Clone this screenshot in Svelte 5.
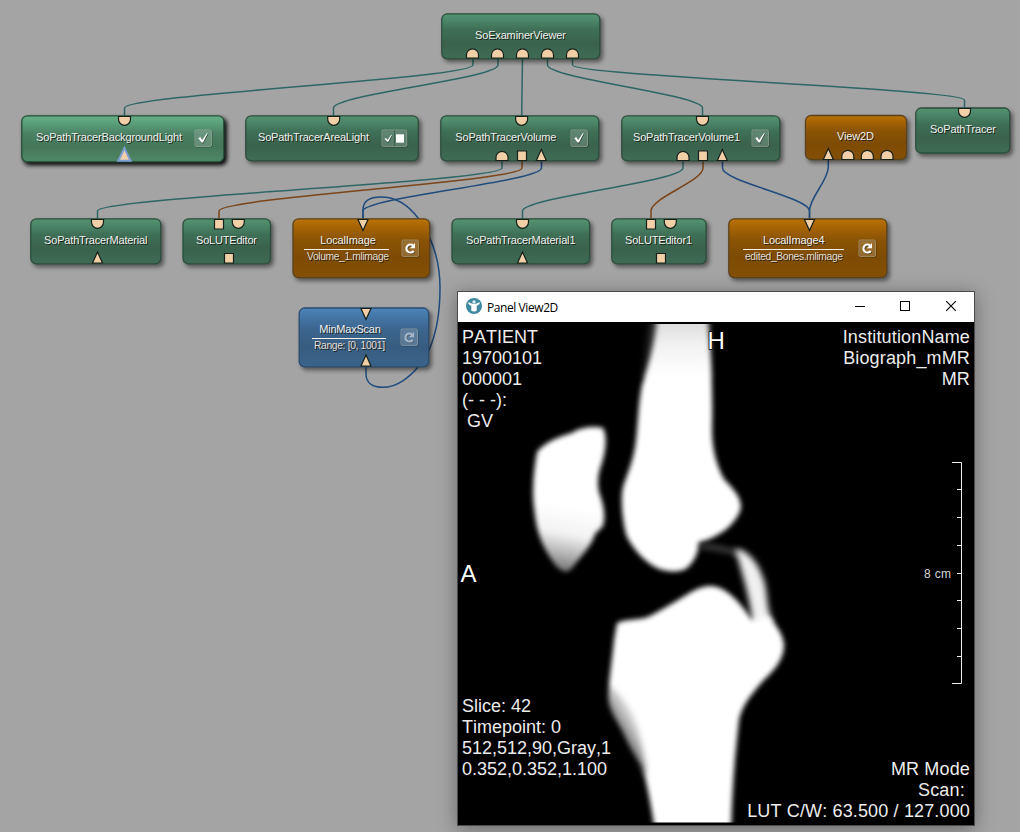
<script>
  const nodes = [
    { x: 441.5, y: 13.5, w: 158, h: 45, kind: 'green', label: 'SoExaminerViewer', tx: 475, tw: 91, ty: 39 },
    { x: 21.5, y: 115.5, w: 202, h: 46, kind: 'lit', label: 'SoPathTracerBackgroundLight', tx: 36, tw: 146, ty: 141, btn: 'check', bx: 194.5, by: 129.5 },
    { x: 245.5, y: 115.5, w: 172.5, h: 45, kind: 'green', label: 'SoPathTracerAreaLight', tx: 258, tw: 111, ty: 141, btn: 'double', bx: 381.5, by: 129.5 },
    { x: 440.5, y: 115.5, w: 158, h: 45, kind: 'green', label: 'SoPathTracerVolume', tx: 455.3, tw: 101, ty: 141, btn: 'check', bx: 570.5, by: 129.5 },
    { x: 621.5, y: 115.5, w: 158, h: 45, kind: 'green', label: 'SoPathTracerVolume1', tx: 633, tw: 107, ty: 141, btn: 'check', bx: 751.5, by: 129.5 },
    { x: 805.2, y: 115.2, w: 101, h: 44, kind: 'orange', label: 'View2D', tx: 837, tw: 37, ty: 140 },
    { x: 915.5, y: 107.7, w: 94, h: 45, kind: 'green', label: 'SoPathTracer', tx: 930, tw: 66, ty: 133 },
    { x: 30.5, y: 218.5, w: 130, h: 45, kind: 'green', label: 'SoPathTracerMaterial', tx: 44, tw: 103.5, ty: 244 },
    { x: 182.7, y: 218.5, w: 87.5, h: 45, kind: 'green', label: 'SoLUTEditor', tx: 196, tw: 61, ty: 244 },
    { x: 292.7, y: 218.5, w: 136.6, h: 58.8, kind: 'orange', label: 'LocalImage', tx: 320.3, tw: 55.5, ty: 244, sub: 'Volume_1.mlimage', sx: 307, sw: 82, lx: 304, lw: 85, btn: 'reload', bx: 401.5, by: 239.5 },
    { x: 451.7, y: 218.5, w: 137.6, h: 45, kind: 'green', label: 'SoPathTracerMaterial1', tx: 466, tw: 109.5, ty: 244 },
    { x: 611.5, y: 218.5, w: 94.3, h: 45, kind: 'green', label: 'SoLUTEditor1', tx: 625, tw: 67, ty: 244 },
    { x: 728.5, y: 218.5, w: 158, h: 58.8, kind: 'orange', label: 'LocalImage4', tx: 763, tw: 61.5, ty: 244, sub: 'edited_Bones.mlimage', sx: 745, sw: 98, lx: 743, lw: 101, btn: 'reload', bx: 858.5, by: 239.5 },
    { x: 298.9, y: 307.7, w: 129.5, h: 58.8, kind: 'blue', label: 'MinMaxScan', tx: 319.3, tw: 61.5, ty: 333, sub: 'Range: [0, 1001]', sx: 314, sw: 71, lx: 312, lw: 74, btn: 'dim', bx: 400.5, by: 328.5 }
  ];

  const wire = (x1, y1, x2, y2) => {
    const a = y1 + 7, b = y2 - 8, d = (b - a) * 0.31;
    return `M${x1},${y1}V${a}C${x1},${a + d} ${x2},${b - d} ${x2},${b}V${y2}`;
  };
  const wires = [
    ['teal', wire(473, 58, 124.5, 116)],
    ['teal', wire(498, 58, 333.5, 116)],
    ['teal', 'M522.5,58L521.7,116'],
    ['teal', wire(547.5, 58, 702.5, 116)],
    ['teal', wire(572.5, 58, 964.5, 108)],
    ['teal', wire(502, 161, 97.5, 219)],
    ['brown', wire(522, 161, 219, 219)],
    ['blue', wire(541.5, 161, 363, 219)],
    ['teal', wire(683, 161, 522.5, 219)],
    ['brown', wire(703, 161, 651, 219)],
    ['blue', wire(722.5, 161, 809.5, 219)],
    ['blue', wire(828.3, 160, 809.5, 219)],
    ['blue', 'M363,219V210C363,200 371,197 381,197C396,197 409,206 418,218C432,237 440,262 440,288C440,312 437,332 429,350C426,357 422,362 418,367C409,378 396,387.3 383,387.3C373,387.3 366,383 366,374V362']
  ];

  const shapes = {
    cap: 'M-6,0V-3.2A6,6 0 0 1 6,-3.2V0Z',
    cup: 'M-6,0V2.8A6,6 0 0 0 6,2.8V0Z',
    boxUp: 'M-4.5,0V-9.5H4.5V0Z',
    boxDown: 'M-4.5,0V9.5H4.5V0Z',
    up: 'M-5,0L0,-11L5,0Z',
    down: 'M-5,0H5L0,11Z'
  };
  const ports = [
    ...[472.5, 497.5, 522.5, 547.5, 572.5].map((x) => ['cap', x, 58]),
    ['cup', 124.5, 116.5], ['cup', 333.7, 116.5], ['cup', 521.6, 116.5], ['cup', 702.5, 116.5], ['cup', 964.5, 108.5],
    ['cap', 502, 160.5], ['boxUp', 522, 160.5], ['up', 541.3, 160.5],
    ['cap', 683, 160.5], ['boxUp', 703, 160.5], ['up', 722.3, 160.5],
    ['up', 828.3, 159.5], ['cap', 847.8, 159.5], ['cap', 867.3, 159.5], ['cap', 887, 159.5],
    ['cup', 97.5, 219.5], ['up', 97.5, 263],
    ['boxDown', 219, 219.5], ['cup', 238.3, 219.5], ['boxUp', 229, 263],
    ['down', 363, 219.5],
    ['cup', 522.5, 219.5], ['up', 522.5, 263],
    ['boxDown', 651, 219.5], ['cup', 670.3, 219.5], ['boxUp', 661, 263],
    ['down', 809.5, 219.5],
    ['down', 366, 308.5], ['up', 366, 366]
  ];

  const ticks = [489.5, 517.5, 545.5, 573.5, 600.5, 628.5, 656.5];
  const topLeft = ['PATIENT', '19700101', '000001', '(- - -):', ' GV'];
  const topRight = ['InstitutionName', 'Biograph_mMR', 'MR'];
  const bottomLeft = ['Slice: 42', 'Timepoint: 0', '512,512,90,Gray,1', '0.352,0.352,1.100'];
  const bottomRight = ['MR Mode', 'Scan: ', 'LUT C/W: 63.500 / 127.000'];
</script>

<main class="workspace">
  <svg class="network" width="1020" height="832" viewBox="0 0 1020 832">
    <defs>
      <linearGradient id="green" x1="0" y1="0" x2="0" y2="1">
        <stop offset="0" stop-color="#539371" /><stop offset=".14" stop-color="#4c8768" /><stop offset=".35" stop-color="#3f6f57" /><stop offset=".65" stop-color="#3a624d" /><stop offset="1" stop-color="#3f6b55" />
      </linearGradient>
      <linearGradient id="lit" x1="0" y1="0" x2="0" y2="1">
        <stop offset="0" stop-color="#68b189" /><stop offset=".16" stop-color="#5ba07a" /><stop offset=".4" stop-color="#4a8063" /><stop offset=".65" stop-color="#457759" /><stop offset="1" stop-color="#4d8766" />
      </linearGradient>
      <linearGradient id="orange" x1="0" y1="0" x2="0" y2="1">
        <stop offset="0" stop-color="#bb7307" /><stop offset=".14" stop-color="#a76405" /><stop offset=".35" stop-color="#8b5405" /><stop offset=".65" stop-color="#7d4b04" /><stop offset="1" stop-color="#845005" />
      </linearGradient>
      <linearGradient id="blue" x1="0" y1="0" x2="0" y2="1">
        <stop offset="0" stop-color="#4d85bc" /><stop offset=".14" stop-color="#4577a8" /><stop offset=".35" stop-color="#3c668f" /><stop offset=".65" stop-color="#375c80" /><stop offset="1" stop-color="#3b638a" />
      </linearGradient>
      <filter id="soft" x="-10%" y="-20%" width="125%" height="150%"><feGaussianBlur stdDeviation="1.9" /></filter>
    </defs>

    {#each wires as [color, d]}
      <path class="wire {color}" {d} />
    {/each}

    {#each nodes as n}
      <rect class="shade" class:strong={n.kind === 'lit'} x={n.x + 2} y={n.y + 2.5} width={n.w + 1.5} height={n.h + 1.3} rx="6" filter="url(#soft)" />
      <rect class="body {n.kind}" x={n.x + 0.3} y={n.y + 0.3} width={n.w} height={n.h} rx="5.5" fill="url(#{n.kind})" />
      <text class="drop" x={n.tx + 1} y={n.ty + 1} textLength={n.tw} aria-hidden="true">{n.label}</text>
      <text class="label" x={n.tx} y={n.ty} textLength={n.tw}>{n.label}</text>
      {#if n.sub}
        <rect x={n.lx} y={n.ty + 5} width={n.lw} height="1" fill="#f7f2e9" />
        <text class="drop sub" x={n.sx + 1} y={n.ty + 17} textLength={n.sw} aria-hidden="true">{n.sub}</text>
        <text class="label sub" x={n.sx} y={n.ty + 16} textLength={n.sw}>{n.sub}</text>
      {/if}
      {#if n.btn}
        <g transform="translate({n.bx} {n.by})">
          <rect x="1.1" y="1.1" width={n.btn === 'double' ? 25 : 16.5} height="16.5" rx="1.5" fill="none" stroke="#000" stroke-opacity=".25" />
          <rect class="btn" x=".5" y=".5" width={n.btn === 'double' ? 25 : 16.5} height="16.5" rx="1.5" />
          {#if n.btn === 'check'}
            <path d="M4.5,9.2L6.5,8.2L8.4,11.4L12.6,4.6L14,4.3L9,14H7.6Z" fill="#193328" opacity=".7" />
            <path d="M3.8,8.7L5.8,7.5L7.7,10.5L12.2,3.9L13.4,3.6L8.5,13H7.1Z" fill="#fff" />
          {:else if n.btn === 'double'}
            <path d="M13,1V16.5" stroke="#395e4c" />
            <path d="M3.8,10L5,9.2L6.3,11.6L10,6L11.2,5.8L7.2,13.3H6Z" fill="#193328" opacity=".6" />
            <path d="M3,9.3L4.5,8.4L6,10.6L9.5,5.4L10.5,5.2L6.8,12.3H5.7Z" fill="#fff" />
            <rect x="14.5" y="4.8" width="8" height="8.4" fill="#fff" />
          {:else}
            <g class:dim={n.btn === 'dim'}>
              <path d="M12.2,11.3A4,4 0 1 1 11.5,6" transform="translate(.8 .9)" fill="none" stroke="#2c2418" stroke-width="2" opacity=".6" />
              <path d="M12.2,11.3A4,4 0 1 1 11.5,6" fill="none" stroke="#fff" stroke-width="2.1" />
              <path d="M8.4,8.7H13.5V3.6Z" fill="#fff" />
            </g>
          {/if}
        </g>
      {/if}
    {/each}

    {#each ports as [shape, x, y]}
      <path class="port" d={shapes[shape]} transform="translate({x} {y})" />
    {/each}
    <path d="M118.3,160.8L124.4,148L130.6,160.8Z" fill="#f0cfab" stroke="#7d9fd2" stroke-width="2" />
  </svg>

  <section class="window">
    <header>
      <svg class="logo" width="16" height="16" viewBox="0 0 16 16">
        <circle cx="8" cy="8" r="8" fill="#3f88a0" />
        <circle cx="8" cy="4" r="1.7" fill="#d9edf3" />
        <path d="M2.8,4.1C4.2,5.4 5.2,5.8 8,5.9C10.8,5.8 11.8,5.4 13.2,4.1L13.8,5.4C12.6,7 11.2,7.5 10.7,7.8V12.7C9.4,13.7 6.6,13.7 5.3,12.7V7.8C4.8,7.5 3.4,7 2.2,5.4Z" fill="#fff" />
      </svg>
      <span class="title">Panel View2D</span>
      <svg class="controls" width="110" height="12" viewBox="0 0 110 12" fill="none" stroke="#000">
        <path d="M2,6.5H12" />
        <rect x="47.5" y="1.5" width="9" height="9" />
        <path d="M93.2,1.2L102.8,10.8M102.8,1.2L93.2,10.8" stroke-width="1.1" />
      </svg>
    </header>

    <div class="viewer">
      <svg class="scan" width="516" height="503" viewBox="458 322 516 503">
        <defs>
          <filter id="b2" x="-10%" y="-10%" width="120%" height="120%"><feGaussianBlur stdDeviation="2.4" /></filter>
          <filter id="b3" x="-50%" y="-50%" width="200%" height="200%"><feGaussianBlur stdDeviation="3" /></filter>
          <filter id="bTop" filterUnits="userSpaceOnUse" x="630" y="290" width="110" height="140"><feGaussianBlur stdDeviation="4.5 2" /></filter>
          <clipPath id="slice"><rect x="460" y="324" width="512" height="498.5" /></clipPath>
          <linearGradient id="patella" gradientUnits="userSpaceOnUse" x1="577" y1="508" x2="564" y2="576">
            <stop offset="0" stop-color="#fff" /><stop offset=".4" stop-color="#f2f2f2" /><stop offset=".7" stop-color="#b0b0b0" /><stop offset="1" stop-color="#606060" />
          </linearGradient>
          <linearGradient id="shaft" gradientUnits="userSpaceOnUse" x1="0" y1="322" x2="0" y2="375">
            <stop offset="0" stop-color="#cdcdcd" /><stop offset=".45" stop-color="#ececec" /><stop offset="1" stop-color="#fff" />
          </linearGradient>
          <linearGradient id="flank" gradientUnits="userSpaceOnUse" x1="608" y1="725" x2="644" y2="704">
            <stop offset="0" stop-color="#000" stop-opacity=".75" /><stop offset=".45" stop-color="#000" stop-opacity=".25" /><stop offset="1" stop-color="#000" stop-opacity="0" />
          </linearGradient>
        </defs>
        <g clip-path="url(#slice)">
          <path filter="url(#b2)" fill="url(#shaft)" d="M658,312C656,345 647,370 642,385C638,405 638,425 636,440C634,460 627,474 623,487C620,500 623,525 627,537C634,550 645,562 657,568C666,572 681,573 687,568C694,562 699,552 699,542C707,541 716,536 724,531C732,525 741,514 741,506C740,494 730,486 724,479C716,465 712,447 712,430C713,390 711,350 707,312Z" />
          <path filter="url(#bTop)" fill="#fff" fill-opacity=".3" d="M655,300L645,378H709L708,300Z" />
          <path filter="url(#b2)" fill="url(#patella)" d="M537,452C545,442 558,437 572,433C580,427 595,426 603,428C608,438 605,453 602,463C598,473 597,483 599,492C603,503 606,515 603,526L595,534C592,545 582,555 572,568C567,574 562,572 556,566C545,551 537,535 535,515C531,490 534,470 537,452Z" />
          <path filter="url(#b3)" d="M700,546Q725,548 743,555" fill="none" stroke="#555" stroke-width="4" />
          <path filter="url(#b3)" d="M735,549C750,550 760,566 765,584C768,600 767,612 774,624L752,626C752,605 744,579 735,549Z" fill="#f0f0f0" />
          <path filter="url(#b2)" fill="#fff" d="M617,623C628,618 640,621 650,616C665,608 681,598 693,591C705,585 714,584 724,590C736,597 745,610 752,620L768,616C775,624 783,633 784,645C784,662 770,674 762,682C750,696 742,706 739,720C736,750 732,780 731,840H656C654,820 648,790 645,777C640,763 630,750 625,738C620,725 608,712 608,698C609,680 613,652 614,640Z" />
          <path filter="url(#b3)" d="M600,684L612,688C628,703 642,724 646,775L628,767C615,739 595,719 600,684Z" fill="url(#flank)" />
        </g>
        <g fill="none" stroke="#eee">
          <path d="M952,462.5H961.5V683.5H952" />
          {#each ticks as y}<path d="M957,{y}H961" />{/each}
        </g>
        <g class="marks">
          <text x="707.5" y="349">H</text>
          <text x="460.5" y="582">A</text>
          <text class="cm" x="924" y="578" textLength="27">8 cm</text>
        </g>
      </svg>
      <div class="row">
        <div>{#each topLeft as t}<p>{t}</p>{/each}</div>
        <div class="right">{#each topRight as t}<p>{t}</p>{/each}</div>
      </div>
      <div class="row lower">
        <div class="raised">{#each bottomLeft as t}<p>{t}</p>{/each}</div>
        <div class="right">{#each bottomRight as t}<p>{t}</p>{/each}</div>
      </div>
    </div>
  </section>
</main>

<style>
  :global(body) { margin: 0; overflow: hidden; }
  .workspace { position: relative; width: 1020px; height: 832px; overflow: hidden; background: #a4a4a4; font-family: "Liberation Sans", Arial, sans-serif; }
  .network { display: block; }
  .wire { fill: none; stroke-width: 1.5; }
  .teal { stroke: #2d6765; }
  .brown { stroke: #7b4519; }
  .wire.blue { stroke: #1f4b7d; }
  .shade { fill: #000; opacity: .48; }
  .shade.strong { opacity: .98; }
  .body { stroke: #2c4e3d; stroke-width: 1.3; }
  .body.orange { stroke: #5c431d; }
  .body.blue { stroke: #2b4d6f; }
  .body.lit { stroke: #24503a; }
  .label { font-size: 11px; fill: #f0f0ed; }
  .drop { font-size: 11px; fill: #0c1410; opacity: .8; }
  .sub { font-size: 10.3px; }
  .label.sub { fill: #e4ddd3; }
  .btn { fill: rgba(255, 255, 255, .17); stroke: rgba(215, 220, 205, .38); }
  .dim { opacity: .45; }
  .port { fill: #f1cfa7; stroke: #17201b; stroke-width: 1.2; }

  .window { position: absolute; left: 457px; top: 291px; width: 516px; height: 533px; border: 1px solid #4b4b4b; box-shadow: 0 3px 18px rgba(0, 0, 0, .36); background: #000; }
  header { display: flex; align-items: center; height: 30px; background: #fff; padding: 0 11px 0 8px; }
  .title { margin-left: 5px; flex: 1; font: 12px "Open Sans", "Noto Sans", sans-serif; letter-spacing: -.42px; color: #000; }
  .logo, .controls { position: relative; top: -1px; }
  .viewer { position: relative; box-sizing: border-box; height: 503px; padding: 5px 4px 3px; display: flex; flex-direction: column; justify-content: space-between; overflow: hidden; }
  .scan { position: absolute; left: 0; top: 0; }
  .row { position: relative; display: flex; justify-content: space-between; align-items: flex-start; }
  .lower { align-items: flex-end; }
  .right { text-align: right; }
  .right p { letter-spacing: .15px; }
  .raised { padding-bottom: 42px; }
  p { margin: 0; font-size: 18px; line-height: 21px; color: #ececec; white-space: pre; font-kerning: none; }
  .marks text { font-size: 24px; fill: #fff; stroke: #000; stroke-width: 1.5px; paint-order: stroke; }
  .marks .cm { font-size: 12px; stroke: none; fill: #d8d8d8; }
</style>
